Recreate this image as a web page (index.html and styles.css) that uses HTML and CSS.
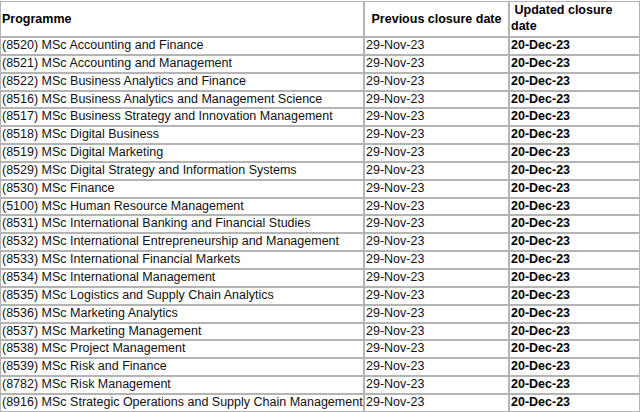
FILE: index.html
```html
<!DOCTYPE html>
<html>
<head>
<meta charset="utf-8">
<link rel="stylesheet" href="styles.css">
</head>
<body>
<table class="closures">
  <colgroup>
    <col class="c-prog">
    <col class="c-prev">
    <col class="c-upd">
  </colgroup>
  <thead>
    <tr>
      <th class="h-prog">Programme</th>
      <th class="h-prev">Previous closure date</th>
      <th class="h-upd">&nbsp;Updated closure date</th>
    </tr>
  </thead>
  <tbody>
    <tr><td>(8520) MSc Accounting and Finance</td><td>29-Nov-23</td><td class="upd">20-Dec-23</td></tr>
    <tr><td>(8521) MSc Accounting and Management</td><td>29-Nov-23</td><td class="upd">20-Dec-23</td></tr>
    <tr><td>(8522) MSc Business Analytics and Finance</td><td>29-Nov-23</td><td class="upd">20-Dec-23</td></tr>
    <tr><td>(8516) MSc Business Analytics and Management Science</td><td>29-Nov-23</td><td class="upd">20-Dec-23</td></tr>
    <tr><td>(8517) MSc Business Strategy and Innovation Management</td><td>29-Nov-23</td><td class="upd">20-Dec-23</td></tr>
    <tr><td>(8518) MSc Digital Business</td><td>29-Nov-23</td><td class="upd">20-Dec-23</td></tr>
    <tr><td>(8519) MSc Digital Marketing</td><td>29-Nov-23</td><td class="upd">20-Dec-23</td></tr>
    <tr><td>(8529) MSc Digital Strategy and Information Systems</td><td>29-Nov-23</td><td class="upd">20-Dec-23</td></tr>
    <tr><td>(8530) MSc Finance</td><td>29-Nov-23</td><td class="upd">20-Dec-23</td></tr>
    <tr><td>(5100) MSc Human Resource Management</td><td>29-Nov-23</td><td class="upd">20-Dec-23</td></tr>
    <tr><td>(8531) MSc International Banking and Financial Studies</td><td>29-Nov-23</td><td class="upd">20-Dec-23</td></tr>
    <tr><td>(8532) MSc International Entrepreneurship and Management</td><td>29-Nov-23</td><td class="upd">20-Dec-23</td></tr>
    <tr><td>(8533) MSc International Financial Markets</td><td>29-Nov-23</td><td class="upd">20-Dec-23</td></tr>
    <tr><td>(8534) MSc International Management</td><td>29-Nov-23</td><td class="upd">20-Dec-23</td></tr>
    <tr><td>(8535) MSc Logistics and Supply Chain Analytics</td><td>29-Nov-23</td><td class="upd">20-Dec-23</td></tr>
    <tr><td>(8536) MSc Marketing Analytics</td><td>29-Nov-23</td><td class="upd">20-Dec-23</td></tr>
    <tr><td>(8537) MSc Marketing Management</td><td>29-Nov-23</td><td class="upd">20-Dec-23</td></tr>
    <tr><td>(8538) MSc Project Management</td><td>29-Nov-23</td><td class="upd">20-Dec-23</td></tr>
    <tr><td>(8539) MSc Risk and Finance</td><td>29-Nov-23</td><td class="upd">20-Dec-23</td></tr>
    <tr><td>(8782) MSc Risk Management</td><td>29-Nov-23</td><td class="upd">20-Dec-23</td></tr>
    <tr><td>(8916) MSc Strategic Operations and Supply Chain Management</td><td>29-Nov-23</td><td class="upd">20-Dec-23</td></tr>
  </tbody>
</table>
</body>
</html>
```
FILE: styles.css
```css
html, body {
  margin: 0;
  padding: 0;
  background: #ffffff;
}
body {
  padding-top: 1px;
  font-family: "Liberation Sans", Arial, sans-serif;
  font-size: 12.5px;
  color: #111111;
}
.closures {
  width: 640px;
  border-collapse: separate;
  border-spacing: 0;
  table-layout: fixed;
}
.c-prog { width: 364px; }
.c-prev { width: 145px; }
.c-upd { width: 131px; }
.closures th,
.closures td {
  border: 1px solid #b4b4b4;
  padding: 0 1px;
  line-height: 15.85px;
  text-align: left;
  white-space: nowrap;
}
.closures th {
  font-weight: bold;
  height: 34px;
  line-height: 16px;
  color: #000000;
}
.closures .h-prog { vertical-align: middle; }
.closures .h-prev { text-align: center; vertical-align: middle; }
.closures .h-upd { white-space: normal; vertical-align: top; }
.closures td.upd { font-weight: bold; color: #000000; }
```
